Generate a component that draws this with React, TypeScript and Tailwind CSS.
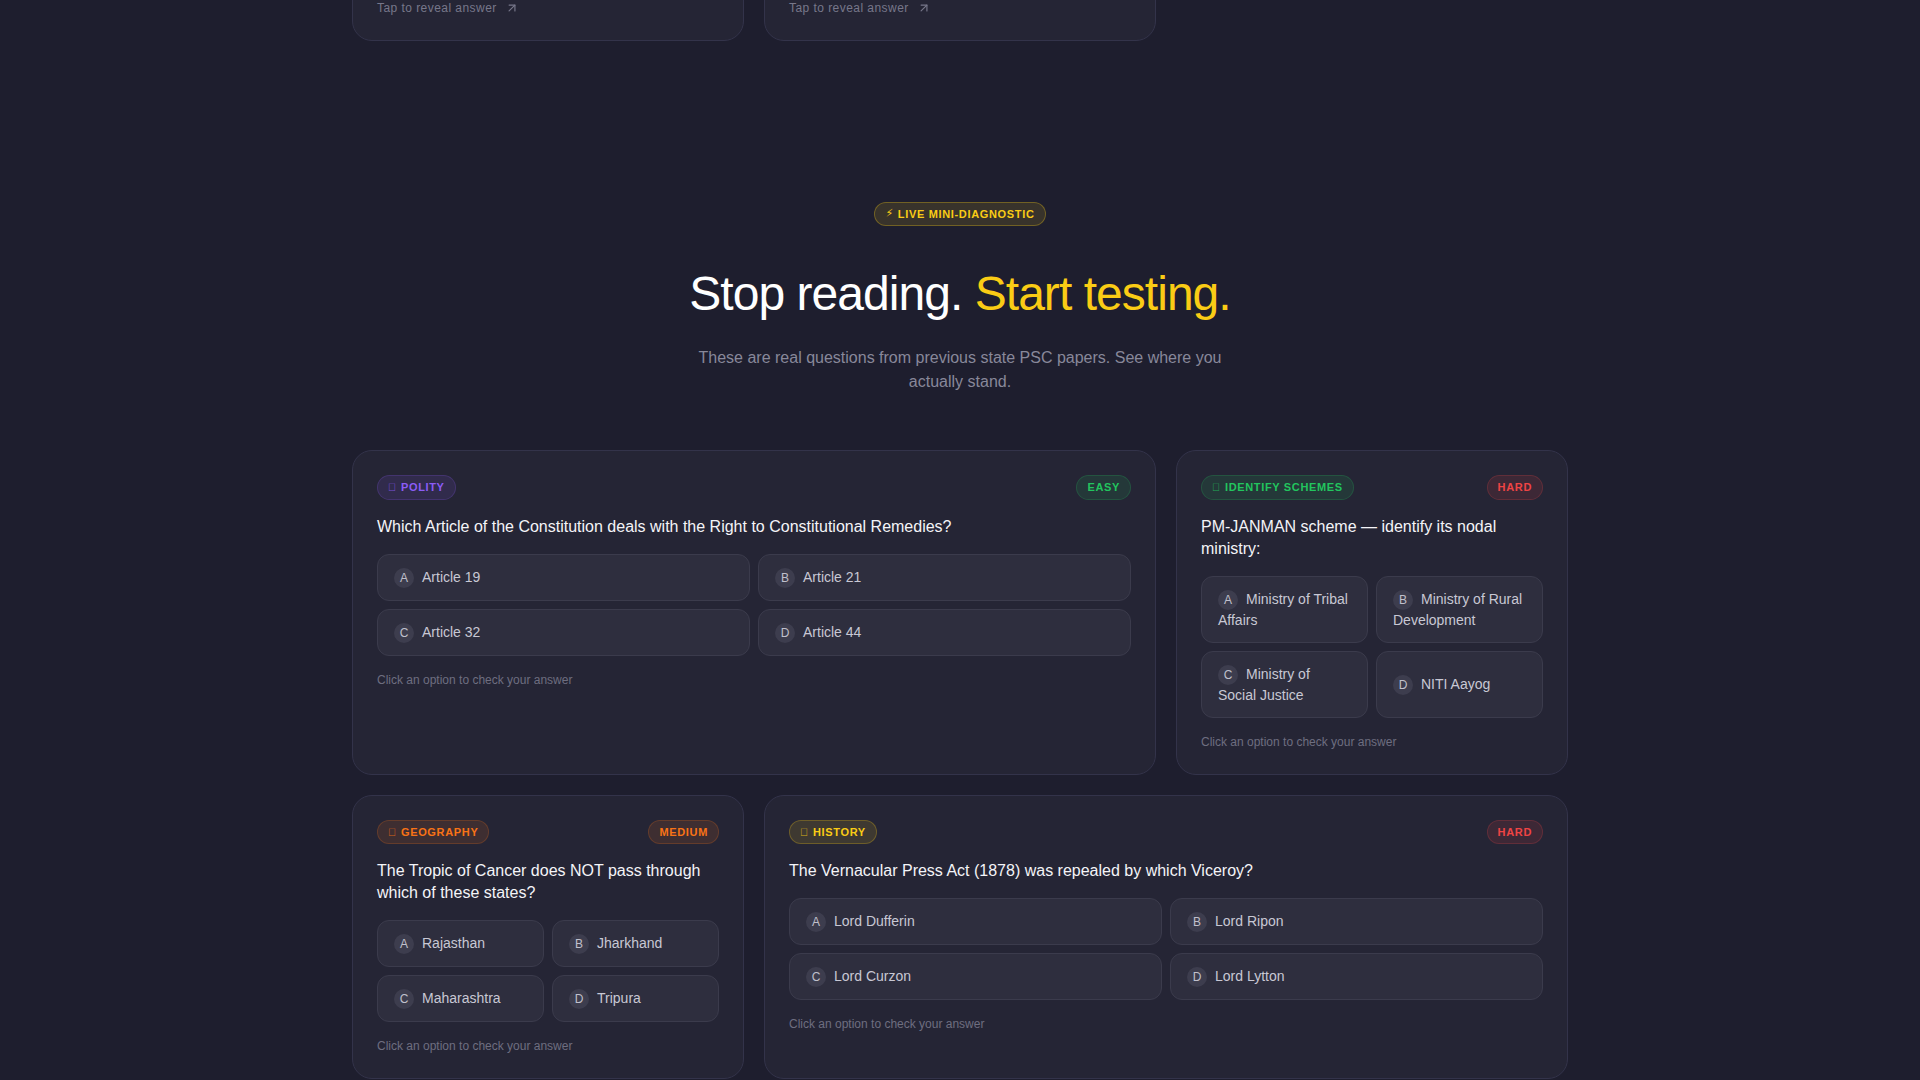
import { ArrowUpRight } from 'lucide-react';

type Tone = 'purple' | 'green' | 'red' | 'orange' | 'yellow';

interface Question {
  category: string;
  categoryTone: Tone;
  level: string;
  levelTone: Tone;
  text: string;
  options: string[];
  className?: string;
}

const toneStyles: Record<Tone, string> = {
  purple: 'text-[#8b5cf6] bg-[#8b5cf6]/12 border-[#8b5cf6]/20',
  green: 'text-[#22c55e] bg-[#22c55e]/12 border-[#22c55e]/20',
  red: 'text-[#ef4444] bg-[#ef4444]/12 border-[#ef4444]/20',
  orange: 'text-[#f97316] bg-[#f97316]/12 border-[#f97316]/20',
  yellow: 'text-[#facc15] bg-[#facc15]/12 border-[#facc15]/25',
};

const questions: Question[] = [
  {
    category: 'POLITY',
    categoryTone: 'purple',
    level: 'EASY',
    levelTone: 'green',
    text: 'Which Article of the Constitution deals with the Right to Constitutional Remedies?',
    options: ['Article 19', 'Article 21', 'Article 32', 'Article 44'],
    className: 'col-span-2',
  },
  {
    category: 'IDENTIFY SCHEMES',
    categoryTone: 'green',
    level: 'HARD',
    levelTone: 'red',
    text: 'PM-JANMAN scheme \u2014 identify its nodal ministry:',
    options: ['Ministry of Tribal Affairs', 'Ministry of Rural Development', 'Ministry of Social Justice', 'NITI Aayog'],
  },
  {
    category: 'GEOGRAPHY',
    categoryTone: 'orange',
    level: 'MEDIUM',
    levelTone: 'orange',
    text: 'The Tropic of Cancer does NOT pass through which of these states?',
    options: ['Rajasthan', 'Jharkhand', 'Maharashtra', 'Tripura'],
  },
  {
    category: 'HISTORY',
    categoryTone: 'yellow',
    level: 'HARD',
    levelTone: 'red',
    text: 'The Vernacular Press Act (1878) was repealed by which Viceroy?',
    options: ['Lord Dufferin', 'Lord Ripon', 'Lord Curzon', 'Lord Lytton'],
    className: 'col-span-2',
  },
];

function Pill({ tone, children }: { tone: Tone; children: React.ReactNode }) {
  return (
    <span className={`inline-flex items-center h-[24.5px] px-[10px] rounded-full border text-[11px] font-bold tracking-[0.66px] ${toneStyles[tone]}`}>
      {children}
    </span>
  );
}

function QuestionCard({ q }: { q: Question }) {
  return (
    <div className={`p-6 rounded-[20px] border border-[#33334a] bg-[#252535] ${q.className ?? ''}`}>
      {/* Tags */}
      <div className="flex items-center justify-between mb-4">
        <Pill tone={q.categoryTone}>
          {/* the emoji has no glyph in the reference, it shows as an empty box */}
          <span className="mr-1 font-normal opacity-80">{'\u{E000}'}</span>
          {q.category}
        </Pill>
        <Pill tone={q.levelTone}>{q.level}</Pill>
      </div>

      <p className="mb-4 text-base leading-[22px] text-[#f4f4f8]">{q.text}</p>

      {/* Options */}
      <div className="grid grid-cols-2 gap-2">
        {q.options.map((option, i) => (
          <button key={option} className="px-4 py-3 rounded-xl border border-[#3b3b4c] bg-[#2e2e3e] text-left text-sm leading-5 text-[#c8c8d4]">
            <span className="inline-flex items-center justify-center w-5 h-5 mr-2 rounded-full bg-[#3d3d4e] text-xs leading-none text-[#c0c0cc]">
              {'ABCD'[i]}
            </span>
            {option}
          </button>
        ))}
      </div>

      <p className="mt-4 text-xs leading-4 text-[#6e6e80]">Click an option to check your answer</p>
    </div>
  );
}

function RevealCard() {
  return (
    <div className="h-[141px] flex flex-col justify-end px-6 pb-6 rounded-[20px] border border-[#33334a] bg-[#252535]">
      <div className="flex items-center gap-2 text-xs leading-4 tracking-[0.45px] text-[#77778a]">
        Tap to reveal answer
        <ArrowUpRight className="w-3.5 h-3.5" />
      </div>
    </div>
  );
}

export default function App() {
  return (
    <div className="h-screen overflow-hidden bg-[#1e1e2e] font-['Liberation_Sans',Arial,sans-serif]">
      <div className="w-[1216px] mx-auto">
        {/* Flashcards, scrolled off the top */}
        <div className="grid grid-cols-3 gap-5 -mt-[100px]">
          <RevealCard />
          <RevealCard />
        </div>

        <section className="pt-20">
          <div className="flex flex-col items-center mt-[81px] mb-[56px] text-center">
            <span className="inline-flex items-center h-6 px-[10px] rounded-full border border-[#facc15]/30 bg-[#facc15]/12 text-[11px] font-bold tracking-[0.66px] text-[#facc15]">
              <span className="mr-1 font-['DejaVu_Sans']">{'\u26A1\uFE0E'}</span>LIVE MINI-DIAGNOSTIC
            </span>
            <h2 className="mt-[39px] text-[48px] leading-[58px] tracking-[-0.96px] text-white">
              Stop reading. <span className="text-[#facc15]">Start testing.</span>
            </h2>
            <p className="mt-[23px] w-[560px] text-base leading-6 text-[#88889a]">
              These are real questions from previous state PSC papers. See where you actually stand.
            </p>
          </div>

          <div className="grid grid-cols-3 gap-5">
            {questions.map((q) => (
              <QuestionCard key={q.category} q={q} />
            ))}
          </div>
        </section>
      </div>
    </div>
  );
}
